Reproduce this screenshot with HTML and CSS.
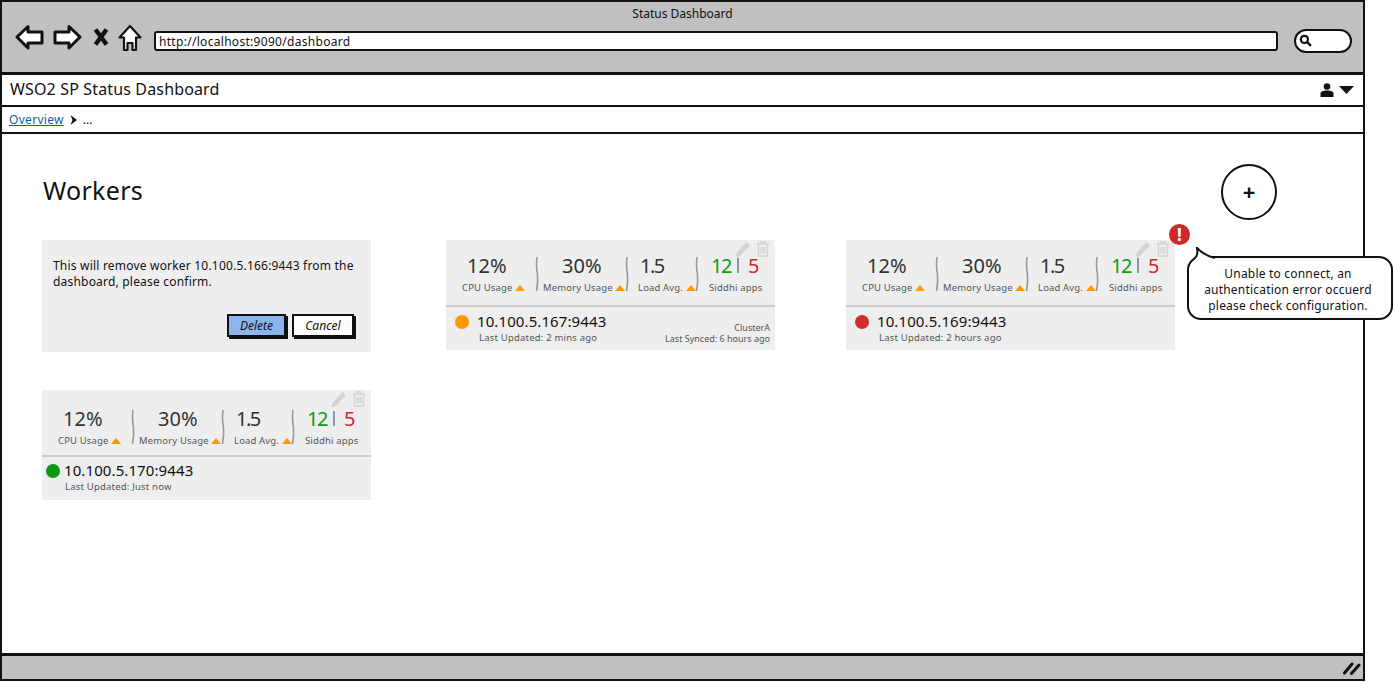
FILE: index.html
```html
<!DOCTYPE html>
<html>
  <head>
    <meta charset="UTF-8" />
    <title>Status Dashboard</title>
    <link rel="stylesheet" href="styles.css">
  </head>
  <body>
    <!-- shared icons -->
    <svg class="defs" width="0" height="0">
      <symbol id="sep" viewBox="0 0 6 36">
        <path d="M3 1C2 10 2.5 14 3.5 18C4 24 3.500 30 2.5 35" fill="none" stroke="#999" stroke-width="1.6" />
      </symbol>
      <symbol id="up" viewBox="0 0 10 6">
        <path d="M5 0L10 6H0Z" fill="#ff9800" />
      </symbol>
      <symbol id="pencil" viewBox="0 0 16 17">
        <path d="M11.5 1L15 4.5L5 15L0.5 16.5L1.5 11.5Z" fill="#d4d4d4" />
      </symbol>
      <symbol id="trash" viewBox="0 0 14 16">
        <path d="M1 3H13M5 3V1H9V3M2.5 3V15H11.5V3M5 6V12.5M7 6V12.5M9 6V12.5" fill="none" stroke="#d4d4d4" stroke-width="1.4" />
      </symbol>
    </svg>

    <div class="window">
      <header class="browser">
        <div class="browser-title">Status Dashboard</div>
        <div class="browser-bar">
          <svg class="tool" width="30" height="26" viewBox="0 0 30 26">
            <path d="M2 13L13 2.5V8H27V19H13V24Z" fill="#fff" stroke="#111" stroke-width="3" stroke-linejoin="round" />
          </svg>
          <svg class="tool" width="30" height="26" viewBox="0 0 30 26">
            <path d="M28 13L17 2.5V8H3V19H17V24Z" fill="#fff" stroke="#111" stroke-width="3" stroke-linejoin="round" />
          </svg>
          <svg class="tool tool-x" width="16" height="20" viewBox="0 0 16 20">
            <path d="M2.5 2.5L13.5 17.5M13.5 2.5L2.5 17.5" fill="none" stroke="#111" stroke-width="4.5" />
          </svg>
          <svg class="tool tool-home" width="24" height="28" viewBox="0 0 24 28">
            <path d="M12 2L22.5 13.5H18V26H14.5V19H9.5V26H6V13.5H1.5Z" fill="#fff" stroke="#111" stroke-width="2.2" stroke-linejoin="round" />
          </svg>
          <div class="address">http://localhost:9090/dashboard</div>
          <div class="search">
            <svg width="13" height="13" viewBox="0 0 12 12">
              <circle cx="5" cy="5" r="3.3" fill="none" stroke="#111" stroke-width="2" />
              <path d="M7.5 7.5L11 11" stroke="#111" stroke-width="2.2" />
            </svg>
          </div>
        </div>
      </header>

      <nav class="appbar">
        <span class="appbar-title">WSO2 SP Status Dashboard</span>
        <span class="appbar-user">
          <svg width="14" height="14" viewBox="0 0 14 14">
            <circle cx="7" cy="3.5" r="3.3" fill="#111" />
            <path d="M0.5 14V10.5C0.5 8.5 3 7.5 7 7.5C11 7.5 13.5 8.5 13.5 10.5V14Z" fill="#111" />
          </svg>
          <svg width="15" height="8" viewBox="0 0 15 8">
            <path d="M0 0H15L7.5 8Z" fill="#111" />
          </svg>
        </span>
      </nav>

      <div class="crumbs">
        <a class="crumb-link" href="#">Overview</a>
        <svg width="7" height="10" viewBox="0 0 7 10">
          <path d="M0.5 0L7 5L0.5 10L2.5 5Z" fill="#111" />
        </svg>
        <span class="crumb-more">...</span>
      </div>

      <main class="content">
        <div class="content-head">
          <h1>Workers</h1>
          <button class="add-btn" type="button">+</button>
        </div>

        <div class="cards">
          <div class="card card-confirm">
            <p>This will remove worker 10.100.5.166:9443 from the dashboard, please confirm.</p>
            <div class="confirm-actions">
              <button class="sketch-btn sketch-btn-blue" type="button">Delete</button>
              <button class="sketch-btn" type="button">Cancel</button>
            </div>
          </div>

          <div class="card">
            <div class="card-tools">
              <svg width="16" height="17"><use href="#pencil" /></svg>
              <svg width="14" height="16"><use href="#trash" /></svg>
            </div>
            <div class="stats">
              <div class="stat stat-cpu"><b>12%</b><span>CPU Usage <svg width="10" height="6"><use href="#up" /></svg></span></div>
              <svg class="sep" width="6" height="36"><use href="#sep" /></svg>
              <div class="stat stat-mem"><b>30%</b><span>Memory Usage <svg width="10" height="6"><use href="#up" /></svg></span></div>
              <svg class="sep" width="6" height="36"><use href="#sep" /></svg>
              <div class="stat stat-load"><b>1.5</b><span>Load Avg. <svg width="10" height="6"><use href="#up" /></svg></span></div>
              <svg class="sep" width="6" height="36"><use href="#sep" /></svg>
              <div class="stat stat-apps"><b><i class="green">12</i><i class="bar"></i><i class="red">5</i></b><span>Siddhi apps</span></div>
            </div>
            <div class="card-foot">
              <span class="dot dot-orange"></span>
              <div class="worker">
                <div class="worker-ip">10.100.5.167:9443</div>
                <div class="worker-sub">Last Updated: 2 mins ago</div>
              </div>
              <div class="worker-cluster">
                <div>ClusterA</div>
                <div>Last Synced: 6 hours ago</div>
              </div>
            </div>
          </div>

          <div class="card">
            <div class="card-tools">
              <svg width="16" height="17"><use href="#pencil" /></svg>
              <svg width="14" height="16"><use href="#trash" /></svg>
            </div>
            <div class="stats">
              <div class="stat stat-cpu"><b>12%</b><span>CPU Usage <svg width="10" height="6"><use href="#up" /></svg></span></div>
              <svg class="sep" width="6" height="36"><use href="#sep" /></svg>
              <div class="stat stat-mem"><b>30%</b><span>Memory Usage <svg width="10" height="6"><use href="#up" /></svg></span></div>
              <svg class="sep" width="6" height="36"><use href="#sep" /></svg>
              <div class="stat stat-load"><b>1.5</b><span>Load Avg. <svg width="10" height="6"><use href="#up" /></svg></span></div>
              <svg class="sep" width="6" height="36"><use href="#sep" /></svg>
              <div class="stat stat-apps"><b><i class="green">12</i><i class="bar"></i><i class="red">5</i></b><span>Siddhi apps</span></div>
            </div>
            <div class="card-foot">
              <span class="dot dot-red"></span>
              <div class="worker">
                <div class="worker-ip">10.100.5.169:9443</div>
                <div class="worker-sub">Last Updated: 2 hours ago</div>
              </div>
            </div>
            <span class="error-badge">!</span>
            <div class="bubble">
              <svg class="bubble-tail" width="24" height="14" viewBox="0 0 24 14">
                <path d="M2 13C5 10 6 6 5 1C9 5 14 9 23 11V14H2Z" fill="#fff" />
                <path d="M2 12C5 10 6 6 5 1C9 5 14 9 23 11" fill="none" stroke="#111" stroke-width="2" />
              </svg>
              Unable to connect, an authentication error occuerd please check configuration.
            </div>
          </div>

          <div class="card card-low">
            <div class="card-tools">
              <svg width="16" height="17"><use href="#pencil" /></svg>
              <svg width="14" height="16"><use href="#trash" /></svg>
            </div>
            <div class="stats">
              <div class="stat stat-cpu"><b>12%</b><span>CPU Usage <svg width="10" height="6"><use href="#up" /></svg></span></div>
              <svg class="sep" width="6" height="36"><use href="#sep" /></svg>
              <div class="stat stat-mem"><b>30%</b><span>Memory Usage <svg width="10" height="6"><use href="#up" /></svg></span></div>
              <svg class="sep" width="6" height="36"><use href="#sep" /></svg>
              <div class="stat stat-load"><b>1.5</b><span>Load Avg. <svg width="10" height="6"><use href="#up" /></svg></span></div>
              <svg class="sep" width="6" height="36"><use href="#sep" /></svg>
              <div class="stat stat-apps"><b><i class="green">12</i><i class="bar"></i><i class="red">5</i></b><span>Siddhi apps</span></div>
            </div>
            <div class="card-foot">
              <span class="dot dot-green"></span>
              <div class="worker">
                <div class="worker-ip">10.100.5.170:9443</div>
                <div class="worker-sub">Last Updated: Just now</div>
              </div>
            </div>
          </div>
        </div>
      </main>

      <footer class="statusbar">
        <svg width="18" height="14" viewBox="0 0 18 14">
          <path d="M1.5 12L9 3M8.5 12.5L16 4" stroke="#111" stroke-width="3" stroke-linecap="round" />
        </svg>
      </footer>
    </div>
  </body>
</html>
```

FILE: styles.css
```css
/* Sketch style window */
html,
body {
  margin: 0;
  height: 100%;
  overflow: hidden;
  background-color: #fff;
}
body {
  font-family: "Noto Sans", Arial, sans-serif;
  color: #111;
}
.defs {
  position: absolute;
}
.window {
  box-sizing: border-box;
  width: 1365px;
  height: 681px;
  border: 2px solid #111;
  display: flex;
  flex-direction: column;
}

/* Browser chrome */
.browser {
  height: 70px;
  flex: none;
  background-color: #c0c0c0;
}
.browser-title {
  text-align: center;
  font-size: 12px;
  line-height: 16px;
  padding-top: 4px;
}
.browser-bar {
  display: flex;
  align-items: flex-start;
  padding: 0 11px 0 13px;
  margin-top: 2px;
}
.tool {
  margin-right: 7px;
  flex: none;
}
.tool-x {
  margin: 3px 9px 0 4px;
}
.tool-home {
  margin-right: 0;
}
.address {
  flex: 1;
  height: 20px;
  line-height: 17px;
  margin: 7px 0 0 12px;
  padding-left: 3px;
  border: 2px solid #111;
  border-radius: 3px;
  background-color: #fff;
  font-size: 12px;
  letter-spacing: 0.3px;
  box-sizing: border-box;
}
.search {
  box-sizing: border-box;
  width: 58px;
  height: 24px;
  margin: 5px 0 0 16px;
  padding: 3px 0 0 3px;
  border: 2px solid #111;
  border-radius: 12px;
  background-color: #fff;
}
.search svg {
  display: block;
}

/* App bar and breadcrumb */
.appbar {
  box-sizing: border-box;
  height: 33px;
  flex: none;
  border-top: 3px solid #111;
  display: flex;
  align-items: center;
  justify-content: space-between;
  padding: 0 9px 0 8px;
}
.appbar-title {
  font-size: 16px;
  letter-spacing: 0.15px;
  padding-bottom: 2px;
}
.appbar-user {
  display: flex;
  align-items: center;
  gap: 5px;
}
.crumbs {
  box-sizing: border-box;
  height: 27px;
  flex: none;
  border-top: 2px solid #111;
  display: flex;
  align-items: center;
  gap: 6px;
  padding-left: 7px;
  font-size: 12px;
}
.crumb-link {
  color: #1a5a9e;
  text-decoration: underline;
  letter-spacing: 0.3px;
}
.crumb-more {
  line-height: 1;
}

/* Content */
.content {
  flex: 1;
  min-height: 0;
  border-top: 2px solid #111;
  padding: 30px 0 0 40px;
  position: relative;
}
.content-head {
  display: flex;
  align-items: center;
  justify-content: space-between;
  padding-right: 86px;
  margin-bottom: 20px;
}
h1 {
  margin: 0;
  padding: 0 0 4px 1px;
  font-size: 25px;
  font-weight: 400;
  letter-spacing: 0.3px;
}
.add-btn {
  width: 56px;
  height: 56px;
  padding: 0 0 3px;
  border: 2px solid #111;
  border-radius: 50%;
  background-color: #fff;
  color: #111;
  font-family: inherit;
  font-size: 22px;
  font-weight: 700;
}
.cards {
  display: grid;
  grid-template-columns: 404px 400px 329px;
  grid-auto-rows: 150px;
  align-items: start;
}
.card {
  position: relative;
  width: 329px;
  height: 110px;
  background-color: #eee;
  box-sizing: border-box;
}

/* Confirm card */
.card-confirm {
  height: 112px;
  padding: 18px 11px 0;
}
.card-confirm p {
  margin: 0;
  font-size: 12px;
  line-height: 16px;
  letter-spacing: 0.2px;
}
.confirm-actions {
  display: flex;
  justify-content: flex-end;
  gap: 6px;
  margin-top: 24px;
  padding-right: 6px;
}
.sketch-btn {
  box-sizing: border-box;
  width: 62px;
  height: 23px;
  padding: 0;
  border: 2px solid #111;
  background-color: #fff;
  box-shadow: 2px 2px 0 #111;
  font-family: inherit;
  font-size: 12px;
  font-style: italic;
  color: #111;
}
.sketch-btn-blue {
  width: 59px;
  background-color: #8cb4ee;
}

/* Worker card */
.card-tools {
  position: absolute;
  top: 1px;
  right: 5px;
  display: flex;
  gap: 5px;
}
.stats {
  height: 67px;
  box-sizing: border-box;
  border-bottom: 2px solid #ccc;
  display: flex;
  align-items: flex-start;
  padding: 12px 0 0 14px;
}
.card-low .stats {
  padding-top: 15px;
}
.sep {
  flex: none;
  margin-top: 4px;
}
.stat {
  flex: none;
  box-sizing: border-box;
  display: flex;
  flex-direction: column;
}
.stat b {
  font-size: 20px;
  line-height: 27px;
  font-weight: 400;
  color: #333;
  display: flex;
  align-items: center;
}
.stat span {
  font-size: 9.5px;
  line-height: 14px;
  letter-spacing: 0.15px;
  color: #555;
  white-space: nowrap;
  margin-top: 2px;
}
.stat i {
  font-style: normal;
}
.stat-cpu {
  width: 74px;
  padding-left: 2px;
}
.stat-cpu b {
  padding-left: 5px;
}
.stat-mem {
  width: 84px;
  padding-left: 3px;
}
.stat-mem b {
  padding-left: 19px;
}
.stat-load {
  width: 64px;
  padding-left: 8px;
}
.stat-load b {
  padding-left: 2px;
  letter-spacing: -1.5px;
}
.stat-apps {
  padding-left: 9px;
}
.stat-apps b {
  padding-left: 2px;
  letter-spacing: -1.5px;
}
.green {
  color: #0a9a12;
}
.red {
  color: #cc2a2a;
}
.bar {
  width: 2px;
  height: 15px;
  margin: 0 9px 0 6px;
  background-color: #8a9aa8;
}
.card-foot {
  display: flex;
  align-items: flex-start;
  padding: 4px 5px 0 9px;
}
.dot {
  width: 14px;
  height: 14px;
  border-radius: 50%;
  margin-top: 4px;
  flex: none;
}
.dot-orange {
  background-color: #ff9800;
}
.dot-red {
  background-color: #d32a2a;
}
.dot-green {
  background-color: #0a9a12;
}
.worker {
  margin-left: 8px;
  flex: 1;
}
.worker-ip {
  font-size: 15px;
  line-height: 20px;
  letter-spacing: 0.1px;
}
.worker-sub,
.worker-cluster {
  font-size: 9.5px;
  line-height: 10px;
  color: #555;
}
.worker-sub {
  padding-left: 2px;
  margin-top: 2px;
  letter-spacing: 0.2px;
}
.worker-cluster {
  font-size: 9px;
  line-height: 11px;
  text-align: right;
  padding-top: 11px;
}
.card-low .card-foot {
  padding: 3px 5px 0 4px;
}
.card-low .worker {
  margin-left: 4px;
}
.card-low .worker-sub {
  padding-left: 1px;
}

/* Error badge and tooltip, they sit over the page */
.error-badge {
  position: absolute;
  left: 323px;
  top: -16px;
  width: 21px;
  height: 21px;
  border-radius: 50%;
  background-color: #cc2a2a;
  color: #fff;
  font-size: 17px;
  font-weight: 700;
  line-height: 21px;
  text-align: center;
}
.bubble {
  position: absolute;
  left: 341px;
  top: 16px;
  box-sizing: border-box;
  width: 206px;
  height: 64px;
  padding: 8px 12px 8px 8px;
  border: 2px solid #111;
  border-radius: 14px;
  background-color: #fff;
  font-size: 12px;
  line-height: 16px;
  letter-spacing: 0.2px;
  text-align: center;
}
.bubble-tail {
  position: absolute;
  left: 3px;
  top: -11px;
}

/* Bottom bar */
.statusbar {
  box-sizing: border-box;
  height: 26px;
  flex: none;
  border-top: 3px solid #111;
  background-color: #c0c0c0;
  display: flex;
  justify-content: flex-end;
  align-items: center;
  padding-right: 2px;
}
```
